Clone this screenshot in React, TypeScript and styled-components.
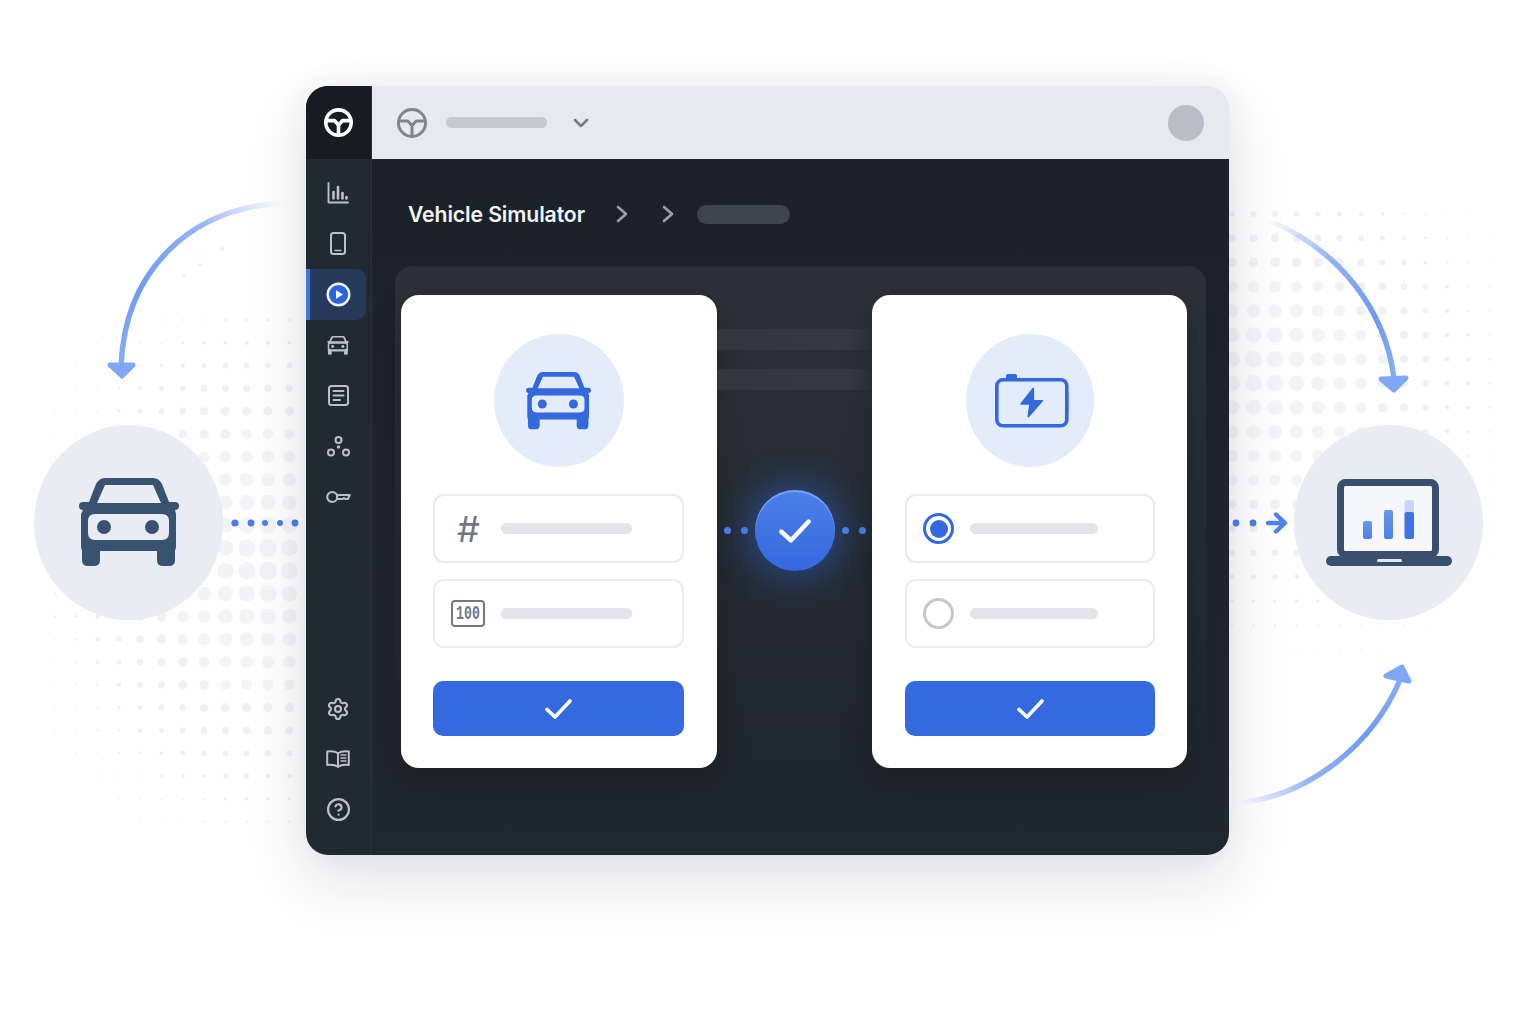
import React from "react";
import styled, { createGlobalStyle } from "styled-components";
import { Settings, CircleHelp } from "lucide-react";

const Global = createGlobalStyle`
  html, body { margin: 0; padding: 0; background: #fefefe; }
  * { box-sizing: border-box; }
`;

const Stage = styled.div`
  position: relative;
  width: 1536px;
  height: 1024px;
  overflow: hidden;
  padding: 86px 0 0 306px;
  background: #fefefe;
  font-family: Inter, "Liberation Sans", sans-serif;
`;
const Backdrop = styled.svg`
  position: absolute;
  left: 0;
  top: 0;
  width: 1536px;
  height: 1024px;
`;
const Node = styled.div<{ $left: number }>`
  position: absolute;
  left: ${(p) => p.$left}px;
  top: 425px;
  width: 189px;
  height: 195px;
  border-radius: 50%;
  background: #e9ecf3;
  display: flex;
  align-items: center;
  justify-content: center;
`;
const Window = styled.div`
  position: relative;
  width: 923px;
  height: 769px;
  border-radius: 22px;
  overflow: hidden;
  display: grid;
  grid-template-columns: 66px 1fr;
  box-shadow: 0 26px 60px rgba(40, 50, 75, 0.12), 0 0 30px rgba(40, 50, 75, 0.07);
`;
const Sidebar = styled.aside`
  display: flex;
  flex-direction: column;
  background: #212931;
  border-right: 1px solid #2a323a;
`;
const LogoCell = styled.div`
  height: 73px;
  flex: none;
  display: flex;
  align-items: center;
  justify-content: center;
  background: #171c23;
`;
const NavList = styled.nav`
  display: flex;
  flex-direction: column;
  padding-top: 9px;
`;
const BottomNav = styled.nav`
  margin-top: auto;
  display: flex;
  flex-direction: column;
  padding-bottom: 20px;
`;
const NavItem = styled.div<{ $active?: boolean }>`
  position: relative;
  width: 60px;
  height: 50.6px;
  display: flex;
  align-items: center;
  justify-content: center;
  padding-left: 4px;
  color: #bcc1c8;
  border-radius: 0 10px 10px 0;
  background: ${(p) => (p.$active ? "#25395a" : "transparent")};
  &::before {
    content: "";
    display: ${(p) => (p.$active ? "block" : "none")};
    position: absolute;
    left: 0;
    top: 0;
    bottom: 0;
    width: 4px;
    background: #3f76e4;
  }
`;
const Main = styled.main`
  display: flex;
  flex-direction: column;
  min-width: 0;
`;
const TopBar = styled.header`
  height: 73px;
  flex: none;
  display: flex;
  align-items: center;
  padding: 0 25px;
  background: #e8e9ef;
`;
const TopPill = styled.div`
  width: 101px;
  height: 11px;
  margin-left: 19px;
  border-radius: 6px;
  background: #c5c9d3;
`;
const TopChevron = styled.svg`
  margin-left: 25px;
  width: 18px;
  height: 12px;
  color: #737a87;
`;
const Avatar = styled.div`
  margin-left: auto;
  width: 36px;
  height: 36px;
  border-radius: 50%;
  background: #b8bdc7;
`;
const Content = styled.section`
  flex: 1;
  display: flex;
  flex-direction: column;
  background: linear-gradient(180deg, #1b2129 0%, #20282f 100%);
`;
const Crumbs = styled.div`
  height: 107px;
  flex: none;
  display: flex;
  align-items: center;
  padding: 3px 0 0 36px;
`;
const Title = styled.h1`
  margin: 0;
  font-size: 21.2px;
  font-weight: 600;
  letter-spacing: -0.1px;
  color: #f3f5f8;
`;
const CrumbChevron = styled.svg<{ $gap: number }>`
  margin-left: ${(p) => p.$gap}px;
  width: 12px;
  height: 18px;
  color: #9aa1a9;
`;
const CrumbPill = styled.div`
  margin-left: 23px;
  width: 93px;
  height: 19px;
  border-radius: 10px;
  background: #3d454e;
`;
const Panel = styled.div`
  margin-left: 23px;
  width: 811px;
  height: 560px;
  padding: 29px 19px 0 6px;
  display: flex;
  align-items: flex-start;
  border-radius: 18px 18px 0 0;
  background: linear-gradient(180deg, #2a3139 0%, #262d35 40%, rgba(36, 44, 52, 0) 92%);
`;
const Card = styled.div<{ $width: number; $padLeft: number; $padRight: number }>`
  flex: none;
  width: ${(p) => p.$width}px;
  padding: 39px ${(p) => p.$padRight}px 32px ${(p) => p.$padLeft}px;
  display: flex;
  flex-direction: column;
  background: #fff;
  border-radius: 18px;
  box-shadow: 0 12px 30px rgba(0, 0, 0, 0.22);
`;
const IconCircle = styled.div<{ $width: number }>`
  align-self: center;
  width: ${(p) => p.$width}px;
  height: 133px;
  margin-bottom: 27px;
  border-radius: 50%;
  background: #e3edf9;
  display: flex;
  align-items: center;
  justify-content: center;
`;
const BatteryWrap = styled.div`
  display: flex;
  margin: 3px 0 0 5px;
`;
const Field = styled.div`
  height: 69px;
  display: flex;
  align-items: center;
  gap: 16px;
  padding-left: 16px;
  border: 2px solid #e9ebf0;
  border-radius: 11px;
  & + & {
    margin-top: 16px;
  }
`;
const Hash = styled.span`
  width: 34px;
  text-align: center;
  font-family: Inter, sans-serif;
  font-style: italic;
  font-weight: 400;
  font-size: 36px;
  line-height: 1;
  color: #6f7682;
`;
const Hundred = styled.span`
  width: 34px;
  height: 27px;
  border: 2.5px solid #727986;
  border-radius: 4px;
  display: flex;
  align-items: center;
  justify-content: center;
  color: #727986;
`;
const HundredText = styled.span`
  display: inline-block;
  font-family: "Liberation Mono", monospace;
  font-size: 20px;
  font-weight: 700;
  line-height: 1;
  transform: scaleX(0.66);
  white-space: nowrap;
`;
const FieldPill = styled.div<{ $width: number }>`
  width: ${(p) => p.$width}px;
  height: 11px;
  border-radius: 6px;
  background: #e1e4ea;
`;
const Radio = styled.div<{ $on?: boolean }>`
  flex: none;
  width: 31px;
  height: 31px;
  border-radius: 50%;
  display: flex;
  align-items: center;
  justify-content: center;
  border: 3px solid ${(p) => (p.$on ? "#3468de" : "#c3c7ce")};
  &::after {
    content: "";
    display: ${(p) => (p.$on ? "block" : "none")};
    width: 18px;
    height: 18px;
    border-radius: 50%;
    background: #3468de;
  }
`;
const ConfirmButton = styled.button`
  margin-top: 33px;
  height: 55px;
  border: 0;
  padding: 0;
  border-radius: 10px;
  background: #3569df;
  display: flex;
  align-items: center;
  justify-content: center;
`;
const Middle = styled.div`
  flex: 1;
  min-width: 0;
  padding-top: 34px;
  display: flex;
  flex-direction: column;
`;
const GhostBar = styled.div`
  height: 21px;
  margin-bottom: 19px;
  background: linear-gradient(90deg, #30373f 0%, #333a42 85%, rgba(50, 58, 66, 0.3) 100%);
`;
const Connector = styled.div`
  margin-top: 81px;
  display: flex;
  align-items: center;
  justify-content: center;
  gap: 7px;
`;
const ConnectorDot = styled.span`
  width: 7px;
  height: 7px;
  border-radius: 50%;
  background: #4a7de8;
`;
const ConnectorDots = styled.div`
  display: flex;
  gap: 10px;
`;
const CheckBubble = styled.div`
  flex: none;
  width: 80px;
  height: 81px;
  border-radius: 50%;
  display: flex;
  align-items: center;
  justify-content: center;
  background: linear-gradient(180deg, #4a7fea 0%, #3569dc 100%);
  box-shadow: inset 0 2px 1px rgba(160, 195, 255, 0.55), 0 0 34px 8px rgba(50, 110, 235, 0.42);
`;

const StrokeIcon: React.FC<{ w: number; h: number; box: string; sw?: number; children: React.ReactNode }> = ({
  w,
  h,
  box,
  sw = 2,
  children,
}) => (
  <svg width={w} height={h} viewBox={box} fill="none" stroke="currentColor" strokeWidth={sw} strokeLinecap="round" strokeLinejoin="round">
    {children}
  </svg>
);

const Wheel: React.FC<{ size: number; color: string; sw: number }> = ({ size, color, sw }) => (
  <svg width={size} height={size} viewBox="0 0 24 24" fill="none" stroke={color} strokeWidth={sw} strokeLinejoin="round">
    <circle cx="12" cy="12" r={12 - sw / 2} />
    <path d="M2.5 10.4 L8.6 10.4 L12 14 L15.4 10.4 L21.5 10.4 M12 14 V22" />
    <path d="M10 12.4 H14 L12 15.4 Z" fill={color} strokeWidth="1" />
  </svg>
);

const CAR_D =
  "M26 0H74Q80 0 83 6L90 24H96A4 4 0 0 1 96 32L97 36V68Q97 71 96 72V82Q96 88 90 88H84Q78 88 78 82V73H21V82Q21 88 15 88H9Q3 88 3 82V72Q2 71 2 68V36L4 32A4 4 0 0 1 4 24H10L17 6Q20 0 26 0Z" +
  "M26 7H74L82 25H18Z" +
  "M16 36H83Q90 36 90 43V55Q90 62 83 62H16Q9 62 9 55V43Q9 36 16 36Z";

const Car: React.FC<{ w: number; h: number; color: string }> = ({ w, h, color }) => (
  <svg width={w} height={h} viewBox="0 0 100 89" fill={color}>
    <path fillRule="evenodd" d={CAR_D} />
    <circle cx="25" cy="49" r="7" />
    <circle cx="73" cy="49" r="7" />
  </svg>
);

const Check: React.FC<{ w: number; h: number; sw: number }> = ({ w, h, sw }) => (
  <svg width={w} height={h} viewBox="0 0 27 20" fill="none" stroke="#fff" strokeWidth={sw} strokeLinecap="round" strokeLinejoin="round">
    <path d="M2 10.5 L10 18 L25 2" />
  </svg>
);

const Laptop = () => (
  <svg width="126" height="87" viewBox="0 0 126 87">
    <defs>
      <linearGradient id="barFill" x1="0" y1="0" x2="0" y2="1">
        <stop offset="0" stopColor="#6b95ee" />
        <stop offset="1" stopColor="#4d7fe6" />
      </linearGradient>
    </defs>
    <rect x="14.5" y="3.5" width="95" height="72" rx="5" fill="#f5f7fb" stroke="#3a4f6e" strokeWidth="7" />
    <rect x="0" y="77" width="126" height="10" rx="5" fill="#3a4f6e" />
    <rect x="51" y="80" width="25" height="3" rx="1.5" fill="#e3e7ef" />
    <rect x="37" y="42" width="9" height="18" rx="2" fill="url(#barFill)" />
    <rect x="58" y="31" width="9" height="29" rx="2" fill="url(#barFill)" />
    <rect x="78.5" y="21" width="9.5" height="16" rx="3" fill="#c6d6f6" />
    <rect x="78.5" y="33" width="9.5" height="27" rx="2" fill="#3f72e2" />
  </svg>
);

const Battery = () => (
  <svg width="78" height="58" viewBox="0 0 78 58">
    <rect x="12" y="1" width="11" height="6" rx="1.5" fill="#3468de" />
    <rect x="72" y="19" width="3" height="20" rx="1.5" fill="#a9c2ef" />
    <rect x="2.8" y="6.8" width="70" height="46" rx="6" fill="none" stroke="#3468de" strokeWidth="3.6" />
    <path d="M39.3 15.3 L27 31 H36 L34.3 43.7 L48.3 27.7 H39.3 Z" fill="#3468de" stroke="#3468de" strokeWidth="1.6" strokeLinejoin="round" />
  </svg>
);

/* Halftone background fields */
type Dot = { x: number; y: number; r: number; o: number };
function halftone(
  xs: number[],
  ys: number[],
  cx: number,
  cy: number,
  rx: number,
  ryUp: number,
  ryDown: number,
  rMax: number
): Dot[] {
  const out: Dot[] = [];
  for (const y of ys) {
    for (const x of xs) {
      const dx = (x - cx) / rx;
      const dy = (y - cy) / (y < cy ? ryUp : ryDown);
      const d = Math.sqrt(dx * dx + dy * dy);
      if (d >= 1.1) continue;
      const r = Math.max(1.1, rMax * Math.max(0, 1 - d));
      const o = r > 5 ? 0.55 : r > 2.5 ? 0.72 : d > 0.95 ? 0.4 : 0.8;
      out.push({ x, y, r, o });
    }
  }
  return out;
}
const seq = (start: number, step: number, n: number) => Array.from({ length: n }, (_, i) => start + i * step);

const leftDots = halftone(seq(55, 21.3, 12), seq(320, 22.8, 23), 262, 560, 225, 280, 290, 9.5);
const rightDots = halftone(seq(1232, 21.5, 13), seq(214, 24.2, 19), 1262, 368, 260, 230, 290, 9);
const strays: Dot[] = [
  { x: 222, y: 249, r: 2.2, o: 0.6 },
  { x: 200, y: 255, r: 1, o: 0.7 },
  { x: 200, y: 265, r: 1.8, o: 0.9 },
  { x: 184, y: 275, r: 2, o: 0.7 },
];

const Arrow: React.FC<{ id: string; d: string; head: string; from: [number, number]; to: [number, number] }> = ({
  id,
  d,
  head,
  from,
  to,
}) => (
  <g>
    <defs>
      <linearGradient id={id} gradientUnits="userSpaceOnUse" x1={from[0]} y1={from[1]} x2={to[0]} y2={to[1]}>
        <stop offset="0" stopColor="#7ea4f2" stopOpacity="0" />
        <stop offset="0.35" stopColor="#7ea4f2" stopOpacity="0.85" />
        <stop offset="0.7" stopColor="#6f9bf2" />
        <stop offset="1" stopColor="#88adf6" />
      </linearGradient>
    </defs>
    <path d={d} fill="none" stroke={`url(#${id})`} strokeWidth="5.4" />
    <path d={head} fill="#7fa7f5" stroke="#7fa7f5" strokeWidth="5" strokeLinejoin="round" />
  </g>
);

export default function App() {
  return (
    <Stage>
      <Global />
      <Backdrop viewBox="0 0 1536 1024">
        <g fill="#e9ebf2">
          {[...leftDots, ...rightDots, ...strays].map((p, i) => (
            <circle key={i} cx={p.x} cy={p.y} r={p.r} opacity={p.o} />
          ))}
        </g>
        <Arrow
          id="arrowA"
          d="M283 203 C190 208 125 270 121 366"
          head="M110 365 H133 L122 376 Z"
          from={[283, 203]}
          to={[121, 366]}
        />
        <Arrow
          id="arrowB"
          d="M1268 220 C1340 250 1385 310 1394 378"
          head="M1381 379 L1406 378 L1394 390 Z"
          from={[1268, 220]}
          to={[1394, 378]}
        />
        <Arrow
          id="arrowC"
          d="M1240 803 C1310 795 1372 745 1400 680"
          head="M1402 667 L1386 676 L1409 681 Z"
          from={[1240, 803]}
          to={[1400, 680]}
        />
        <g fill="#4a7de8">
          <circle cx="235" cy="523" r="3.6" />
          <circle cx="251" cy="523" r="3.4" />
          <circle cx="265" cy="523" r="3" />
          <circle cx="280" cy="523" r="3" />
          <circle cx="295" cy="523" r="3.4" />
          <circle cx="1236" cy="523" r="3.4" />
          <circle cx="1253" cy="523" r="3.4" />
        </g>
        <path d="M1268 523 H1284 M1276 514.5 L1285 523 L1276 531.5" fill="none" stroke="#4f82ea" strokeWidth="4.4" strokeLinecap="round" strokeLinejoin="round" />
      </Backdrop>

      <Node $left={34}>
        <Car w={100} h={89} color="#3a5272" />
      </Node>
      <Node $left={1294}>
        <Laptop />
      </Node>

      <Window>
        <Sidebar>
          <LogoCell>
            <Wheel size={29} color="#ffffff" sw={3} />
          </LogoCell>
          <NavList>
            <NavItem>
              <StrokeIcon w={22} h={22} box="0 0 22 22" sw={1.9}>
                <path d="M1.5 1 V20.5 H21" />
                <path d="M6.5 10 V16.5 M11 5 V16.5 M15.5 11 V16.5 M19.5 15 V16.5" strokeWidth="2.6" />
              </StrokeIcon>
            </NavItem>
            <NavItem>
              <StrokeIcon w={16} h={23} box="0 0 16 23" sw={2}>
                <rect x="1" y="1" width="14" height="21" rx="2.5" />
                <path d="M5 18.5 H11" strokeWidth="1.4" />
              </StrokeIcon>
            </NavItem>
            <NavItem $active>
              <svg width="25" height="25" viewBox="0 0 25 25">
                <circle cx="12.5" cy="12.5" r="10.8" fill="#2f64d8" stroke="#f2f4f8" strokeWidth="2.4" />
                <path d="M10 8.2 L17 12.5 L10 16.8 Z" fill="#fff" />
              </svg>
            </NavItem>
            <NavItem>
              <Car w={22} h={19} color="#bcc1c8" />
            </NavItem>
            <NavItem>
              <StrokeIcon w={21} h={21} box="0 0 21 21" sw={2}>
                <rect x="1" y="1" width="19" height="19" rx="2.5" />
                <path d="M5.5 6 H15.5 M5.5 10.5 H15.5 M5.5 15 H12" />
              </StrokeIcon>
            </NavItem>
            <NavItem>
              <StrokeIcon w={23} h={21} box="0 0 23 21" sw={2}>
                <circle cx="11.5" cy="4" r="3" />
                <circle cx="4" cy="16.5" r="3" />
                <circle cx="19" cy="16.5" r="3" />
                <circle cx="11.5" cy="11" r="0.7" />
              </StrokeIcon>
            </NavItem>
            <NavItem>
              <StrokeIcon w={25} h={14} box="0 0 25 14" sw={2.1}>
                <circle cx="6.2" cy="7" r="5" />
                <path d="M11.2 5 H23.8 L21.8 9 H19.5 L18 8 L16.5 9 H11.2" />
              </StrokeIcon>
            </NavItem>
          </NavList>
          <BottomNav>
            <NavItem>
              <Settings size={24} strokeWidth={2.1} />
            </NavItem>
            <NavItem>
              <StrokeIcon w={24} h={18} box="0 0 24 18" sw={2}>
                <path d="M12 3.2 C9.5 1.4 5.5 1 1.2 1.5 V15 C5.5 14.6 9.5 15 12 16.8 C14.5 15 18.5 14.6 22.8 15 V1.5 C18.5 1 14.5 1.4 12 3.2 Z" />
                <path d="M12 3.2 V16.8" />
                <path d="M15 5 H20 M15 8 H20 M15 11 H20" strokeWidth="1.4" />
              </StrokeIcon>
            </NavItem>
            <NavItem>
              <CircleHelp size={25} strokeWidth={2.1} />
            </NavItem>
          </BottomNav>
        </Sidebar>
        <Main>
          <TopBar>
            <Wheel size={30} color="#7d8592" sw={2.4} />
            <TopPill />
            <TopChevron viewBox="0 0 18 12" fill="none" stroke="currentColor" strokeWidth="2.6" strokeLinecap="round" strokeLinejoin="round">
              <path d="M3 3 L9 9 L15 3" />
            </TopChevron>
            <Avatar />
          </TopBar>
          <Content>
            <Crumbs>
              <Title>Vehicle Simulator</Title>
              <CrumbChevron $gap={31} viewBox="0 0 12 18" fill="none" stroke="currentColor" strokeWidth="2.6" strokeLinecap="round" strokeLinejoin="round">
                <path d="M2 2 L10 9 L2 16" />
              </CrumbChevron>
              <CrumbChevron $gap={34} viewBox="0 0 12 18" fill="none" stroke="currentColor" strokeWidth="2.6" strokeLinecap="round" strokeLinejoin="round">
                <path d="M2 2 L10 9 L2 16" />
              </CrumbChevron>
              <CrumbPill />
            </Crumbs>
            <Panel>
              <Card $width={316} $padLeft={32} $padRight={33}>
                <IconCircle $width={130}>
                  <Car w={65} h={58} color="#3468de" />
                </IconCircle>
                <Field>
                  <Hash>#</Hash>
                  <FieldPill $width={131} />
                </Field>
                <Field>
                  <Hundred>
                    <HundredText>100</HundredText>
                  </Hundred>
                  <FieldPill $width={131} />
                </Field>
                <ConfirmButton>
                  <Check w={27} h={20} sw={3.6} />
                </ConfirmButton>
              </Card>
              <Middle>
                <GhostBar />
                <GhostBar />
                <Connector>
                  <ConnectorDots>
                    <ConnectorDot />
                    <ConnectorDot />
                  </ConnectorDots>
                  <CheckBubble>
                    <Check w={32} h={24} sw={3.8} />
                  </CheckBubble>
                  <ConnectorDots>
                    <ConnectorDot />
                    <ConnectorDot />
                  </ConnectorDots>
                </Connector>
              </Middle>
              <Card $width={315} $padLeft={33} $padRight={32}>
                <IconCircle $width={128}>
                  <BatteryWrap>
                    <Battery />
                  </BatteryWrap>
                </IconCircle>
                <Field>
                  <Radio $on />
                  <FieldPill $width={128} />
                </Field>
                <Field>
                  <Radio />
                  <FieldPill $width={128} />
                </Field>
                <ConfirmButton>
                  <Check w={27} h={20} sw={3.6} />
                </ConfirmButton>
              </Card>
            </Panel>
          </Content>
        </Main>
      </Window>
    </Stage>
  );
}
